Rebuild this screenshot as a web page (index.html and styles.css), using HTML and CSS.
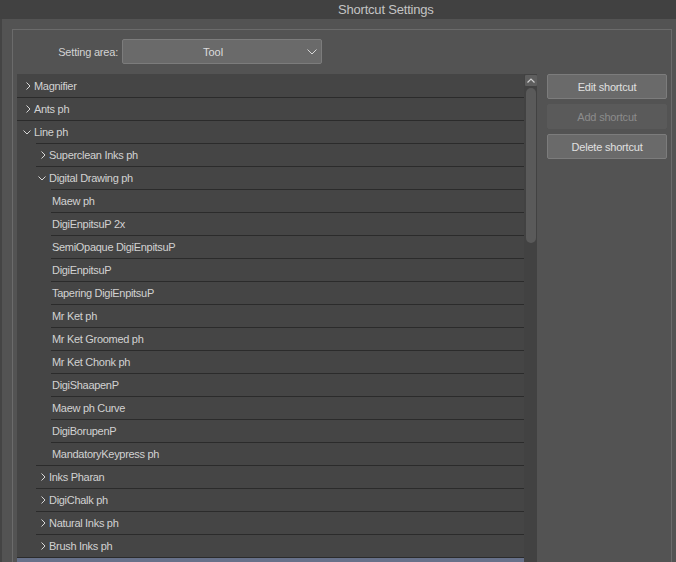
FILE: index.html
```html
<!DOCTYPE html>
<html>
<head>
<meta charset="utf-8">
<link rel="stylesheet" href="styles.css">
</head>
<body>
<div class="screen">
  <div class="titlebar"><span class="title">Shortcut Settings</span></div>
  <div class="window">
    <div class="group">
      <div class="area-row">
        <span class="area-label">Setting area:</span>
        <div class="select">
          <span class="select-text">Tool</span>
          <svg class="select-caret" width="10" height="6" viewBox="0 0 10 6"><polyline points="0.5,0.5 5,5 9.5,0.5" fill="none" stroke="#d8d8d8" stroke-width="1"/></svg>
        </div>
      </div>
      <div class="main">
        <div class="list">
          <div class="rows">
            <div class="row l0"><svg class="chev" width="5" height="8" viewBox="0 0 5 8"><polyline points="0.5,0.5 4,4 0.5,7.5" fill="none" stroke="#d8d8d8" stroke-width="1"/></svg><span>Magnifier</span></div>
            <div class="row l0"><svg class="chev" width="5" height="8" viewBox="0 0 5 8"><polyline points="0.5,0.5 4,4 0.5,7.5" fill="none" stroke="#d8d8d8" stroke-width="1"/></svg><span>Ants ph</span></div>
            <div class="row l0"><svg class="chev down" width="8" height="5" viewBox="0 0 8 5"><polyline points="0.5,0.5 4,4 7.5,0.5" fill="none" stroke="#d8d8d8" stroke-width="1"/></svg><span>Line ph</span></div>
            <div class="row l1"><svg class="chev" width="5" height="8" viewBox="0 0 5 8"><polyline points="0.5,0.5 4,4 0.5,7.5" fill="none" stroke="#d8d8d8" stroke-width="1"/></svg><span>Superclean Inks ph</span></div>
            <div class="row l1"><svg class="chev down" width="8" height="5" viewBox="0 0 8 5"><polyline points="0.5,0.5 4,4 7.5,0.5" fill="none" stroke="#d8d8d8" stroke-width="1"/></svg><span>Digital Drawing ph</span></div>
            <div class="row l2"><span>Maew ph</span></div>
            <div class="row l2"><span>DigiEnpitsuP 2x</span></div>
            <div class="row l2"><span>SemiOpaque DigiEnpitsuP</span></div>
            <div class="row l2"><span>DigiEnpitsuP</span></div>
            <div class="row l2"><span>Tapering DigiEnpitsuP</span></div>
            <div class="row l2"><span>Mr Ket ph</span></div>
            <div class="row l2"><span>Mr Ket Groomed ph</span></div>
            <div class="row l2"><span>Mr Ket Chonk ph</span></div>
            <div class="row l2"><span>DigiShaapenP</span></div>
            <div class="row l2"><span>Maew ph Curve</span></div>
            <div class="row l2"><span>DigiBorupenP</span></div>
            <div class="row l2"><span>MandatoryKeypress ph</span></div>
            <div class="row l1"><svg class="chev" width="5" height="8" viewBox="0 0 5 8"><polyline points="0.5,0.5 4,4 0.5,7.5" fill="none" stroke="#d8d8d8" stroke-width="1"/></svg><span>Inks Pharan</span></div>
            <div class="row l1"><svg class="chev" width="5" height="8" viewBox="0 0 5 8"><polyline points="0.5,0.5 4,4 0.5,7.5" fill="none" stroke="#d8d8d8" stroke-width="1"/></svg><span>DigiChalk ph</span></div>
            <div class="row l1"><svg class="chev" width="5" height="8" viewBox="0 0 5 8"><polyline points="0.5,0.5 4,4 0.5,7.5" fill="none" stroke="#d8d8d8" stroke-width="1"/></svg><span>Natural Inks ph</span></div>
            <div class="row l1"><svg class="chev" width="5" height="8" viewBox="0 0 5 8"><polyline points="0.5,0.5 4,4 0.5,7.5" fill="none" stroke="#d8d8d8" stroke-width="1"/></svg><span>Brush Inks ph</span></div>
            <div class="row l0 selected"></div>
          </div>
          <div class="scrollbar">
            <div class="scroll-up"><svg width="8" height="5" viewBox="0 0 8 5"><polyline points="0.5,4.5 4,1 7.5,4.5" fill="none" stroke="#d0d0d0" stroke-width="1.2"/></svg></div>
            <div class="thumb"></div>
          </div>
        </div>
        <div class="buttons">
          <div class="btn">Edit shortcut</div>
          <div class="btn disabled">Add shortcut</div>
          <div class="btn">Delete shortcut</div>
        </div>
      </div>
    </div>
  </div>
</div>
</body>
</html>
```
FILE: styles.css
```css
html, body {
  margin: 0;
  padding: 0;
  background: #444444;
}
.screen {
  width: 676px;
  height: 562px;
  overflow: hidden;
  display: flex;
  flex-direction: column;
  font-family: "Liberation Sans", Arial, sans-serif;
  font-size: 11px;
  color: #d2d2d2;
}
.titlebar {
  height: 19px;
  flex: none;
  background: #414141;
  padding-left: 338px;
  display: flex;
  align-items: center;
}
.title {
  font-size: 13px;
  color: #c4c4c4;
  letter-spacing: -0.2px;
}
.window {
  flex: 1;
  margin-left: 2px;
  background: #535353;
  padding: 10px 0 0 10px;
  min-height: 0;
}
.group {
  width: 650px;
  height: 600px;
  border: 1px solid #6b6b6b;
  padding: 9px 4px 0 4px;
}
.area-row {
  display: flex;
  align-items: center;
  height: 25px;
}
.area-label {
  width: 101px;
  text-align: right;
  letter-spacing: -0.2px;
}
.select {
  width: 198px;
  height: 23px;
  margin-left: 4px;
  background: #6a6a6a;
  border: 1px solid #7c7c7c;
  border-radius: 2px;
  display: flex;
  align-items: center;
  position: relative;
}
.select-text {
  flex: 1;
  text-align: center;
  padding-right: 18px;
  font-size: 11px;
  color: #dcdcdc;
}
.select-caret {
  position: absolute;
  right: 4px;
  top: 9px;
}
.main {
  display: flex;
  margin-top: 10px;
  gap: 10px;
}
.list {
  width: 520px;
  height: 520px;
  display: flex;
  background: #454545;
}
.rows {
  width: 507px;
  flex: none;
}
.row {
  height: 22px;
  border-top: 1px solid #2b2b2b;
  display: flex;
  align-items: center;
  white-space: nowrap;
  letter-spacing: -0.3px;
}
.row:first-child {
  border-top-color: #454545;
}
.row.l0 { margin-left: 0; padding-left: 9px; }
.row.l1 { margin-left: 19px; padding-left: 5px; }
.row.l2 { margin-left: 34px; padding-left: 1px; }
.chev {
  flex: none;
  margin-right: 3px;
}
.chev.down {
  margin-left: -3px;
  margin-right: 3px;
}
.row.selected {
  background: #67718a;
  color: #ffffff;
}
.scrollbar {
  width: 13px;
  flex: none;
  background: #424242;
  display: flex;
  flex-direction: column;
  align-items: center;
}
.scroll-up {
  width: 12px;
  height: 11px;
  margin-top: 1px;
  background: #5e5e5e;
  border-radius: 1px;
  display: flex;
  align-items: center;
  justify-content: center;
}
.thumb {
  width: 10px;
  height: 155px;
  margin-top: 2px;
  background: #5a5a5a;
  border-radius: 5px;
}
.buttons {
  width: 120px;
  display: flex;
  flex-direction: column;
  gap: 5px;
}
.btn {
  height: 23px;
  border: 1px solid #7c7c7c;
  border-radius: 2px;
  background: #6a6a6a;
  display: flex;
  align-items: center;
  justify-content: center;
  color: #e0e0e0;
  letter-spacing: -0.2px;
}
.btn.disabled {
  background: #5a5a5a;
  border-color: #5a5a5a;
  color: #8c8c8c;
}
```
